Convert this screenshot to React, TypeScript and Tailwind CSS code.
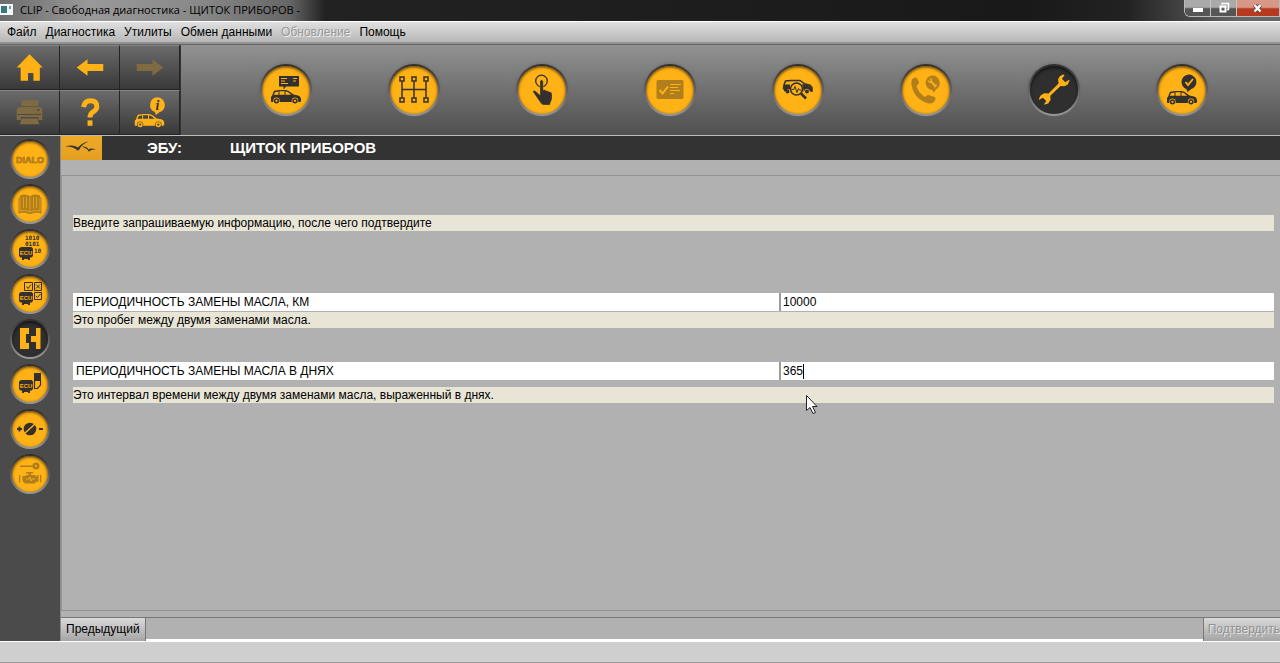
import { useState, type ReactNode } from "react";

const DARK = "#33302d";
const AMBER = "#ffb215";
const DIM = "#b07f1c";

const menuItems = [
  { label: "Файл" },
  { label: "Диагностика" },
  { label: "Утилиты" },
  { label: "Обмен данными" },
  { label: "Обновление", disabled: true },
  { label: "Помощь" },
];

// side view of a hatchback, 30 x 14 units
function Car({ x, y, color, back }: { x: number; y: number; color: string; back: string }) {
  return (
    <g transform={`translate(${x} ${y})`}>
      <path
        fill={color}
        d="M0 11.500V7L1.200 5.600 2.600 1.600Q3 .8 4.400.6L9 0h4.500q2.500 0 4.500 1.200l4.500 3.300 4.500.9q2.500.6 2.900 3.200l.2 2.400-1 .9H.6z"
      />
      <path fill={back} d="M2.800 4.800 4 2.200 7.500 1.400v3.400zM8.500 1.300h5v3.500h-5zM14.500 1.500q1.800 0 3 1l2.700 2.300h-5.700z" />
      <circle cx="5.500" cy="10.800" r="3.200" fill={back} />
      <circle cx="24" cy="10.800" r="3.200" fill={back} />
      <circle cx="5.500" cy="10.800" r="1.900" fill="none" stroke={color} strokeWidth="1.500" />
      <circle cx="24" cy="10.800" r="1.900" fill="none" stroke={color} strokeWidth="1.500" />
    </g>
  );
}

function Chip({ x, y }: { x: number; y: number }) {
  return (
    <g transform={`translate(${x} ${y})`}>
      <path fill={DARK} d="M2 0h10.500l1.500 1.500V9l-1.500 1.500H11V13H9v-1H5v1H3v-2.500H1.500L0 9V1.500z" />
      <text x="7" y="7.500" textAnchor="middle" fontSize="6" fontWeight="700" fontFamily="Liberation Sans, sans-serif" fill={AMBER}>
        ECU
      </text>
    </g>
  );
}

const tools: { label: string; active?: boolean; disabled?: boolean; icon: ReactNode }[] = [
  {
    label: "Автомобиль",
    icon: (
      <>
        <path fill={DARK} d="M17 10h20v10.500H24l-2.500 3v-3H17z" />
        <path stroke={AMBER} strokeWidth="1" d="M19 12.500h6M31 12.500h4M19 15h4M31 15h3M19 17.500h7" />
        <Car x={9} y={24} color={DARK} back={AMBER} />
      </>
    ),
  },
  {
    label: "Коробка передач",
    icon: (
      <g fill="none" stroke={DARK} strokeWidth="1.500">
        <path d="M12 15.500v16M24 15.500v16M36 15.500v16M12 23.500h24" />
        <path
          fill={AMBER}
          d="M10 11h4v4h-4zM22 11h4v4h-4zM34 11h4v4h-4zM10 32h4v4h-4zM22 32h4v4h-4zM34 32h4v4h-4z"
        />
      </g>
    ),
  },
  {
    label: "Выбор",
    icon: (
      <>
        <circle cx="23.500" cy="15" r="5.800" fill="none" stroke={DARK} strokeWidth="1.300" />
        <path
          fill={DARK}
          stroke={AMBER}
          strokeWidth="0.300"
          d="M22 15.500a1.600 1.600 0 0 1 3.200 0V24q2-.6 3 .7 2-.3 2.800 1 2.800-.3 3 2.300v4q0 2.500-1.500 4.500L32 39h-7l-2-1.500-3.500-5-4.500-6.500q-.6-1.500 1-1.500 1 0 1.800.8L22 29z"
        />
      </>
    ),
  },
  {
    label: "Контроль",
    disabled: true,
    icon: (
      <>
        <rect x="10.500" y="14" width="27" height="19" rx="1.500" fill={DIM} />
        <path fill="none" stroke={AMBER} strokeWidth="2" d="m13.500 24 3 3.500 5.500-7" />
        <path stroke={AMBER} strokeWidth="1" d="M24 18.500h11M24 21.500h8M24 24.500h10M24 27.500h4" />
      </>
    ),
  },
  {
    label: "Поиск неисправностей",
    icon: (
      <>
        <path
          fill="none"
          stroke={DARK}
          strokeWidth="1.500"
          d="M11 24l-1.500-1.500L10 19l1.500-4L17 14.500h9l5 3.500 5 1.200 2 2.300v4.500"
        />
        <path fill={DARK} d="M10 18.500h6v5q-3-1-4 1.500l-2 .5zM28 18l7 1.500 3 3v3h-2q-1.500-4-5-2l-1 2.500z" />
        <circle cx="13.500" cy="25.500" r="1.900" fill={DARK} />
        <circle cx="33" cy="25.500" r="1.900" fill={DARK} />
        <circle cx="22.500" cy="23" r="6" fill={AMBER} stroke={DARK} strokeWidth="1.500" />
        <path fill="none" stroke={DARK} strokeWidth="1" d="M17.500 23.500h2.200l1.300-3 2 6 1.500-4 1 1.500h2" />
        <path stroke={DARK} strokeWidth="2.500" d="m27 27.500 5 5" />
      </>
    ),
  },
  {
    label: "Техническая поддержка",
    disabled: true,
    icon: (
      <>
        <path
          fill={DIM}
          d="M10 13.500q2.500-3 5-1.500l2 4q.3 1.500-1.500 3l-1 1Q16.500 27 23 31l2-1.500q1-1 2.500-.3l5 1.800q1.800 1 .5 3.500-2 3.500-6 3Q12.500 34 9.500 19q-.4-3.500.5-5.500z"
        />
        <path fill={DIM} d="M30 9.500a7.500 7.500 0 0 1 3.500 14.200L32 26.500l-2-2.500a7.300 7.300 0 0 1 0-14.500z" />
        <path fill="none" stroke={AMBER} strokeWidth="2" d="m28.500 15 5.500 5.500" />
        <path fill="none" stroke={AMBER} strokeWidth="1.300" d="M26 14.500q1.500 2.500 3 1t-1-3M32.500 21.500q0-2.500 2.500-2" />
      </>
    ),
  },
  {
    label: "Ремонт",
    active: true,
    icon: (
      <path
        fill={AMBER}
        d="m33 8.500-3.200 1.800-1.700 3 .4 4.200L18.500 27.500l-4.200-.3-3.500 2-2 3.800.2.700 4-2 3.200 3.200-2.400 3.800 4.400-1.200 2.300-3.500-.2-4.200L30.500 20l4 .3 3.300-1.800 1.700-4-.4-.8-3.800 2.500-3.400-3.400 2.700-3.600z"
      />
    ),
  },
  {
    label: "Завершение",
    icon: (
      <>
        <path fill={DARK} d="M31 8.500a7.500 7.500 0 0 1 2 14.700L29.500 26l-1.200-3A7.500 7.500 0 0 1 31 8.500z" />
        <path fill="none" stroke={AMBER} strokeWidth="1.800" d="m27.500 16 2.500 3 5-6" />
        <Car x={9} y={25} color={DARK} back={AMBER} />
      </>
    ),
  },
];

const sideTools: { label: string; active?: boolean; disabled?: boolean; icon: ReactNode }[] = [
  {
    label: "Dialogys",
    disabled: true,
    icon: (
      <text
        x="18"
        y="21.500"
        textAnchor="middle"
        fontSize="9"
        fontWeight="700"
        fontFamily="Liberation Sans, sans-serif"
        fill="#dc981a"
        stroke="#9b6b19"
        strokeWidth="0.600"
      >
        DIALO
      </text>
    ),
  },
  {
    label: "Документация",
    disabled: true,
    icon: (
      <>
        <path
          fill={DIM}
          d="M6.500 11.500H8V9.500q6-2.500 10 .8 4-3.300 10-.8v2h1.500v16q-6.500-1.500-10 .5h-3q-3.500-2-10-.5z"
        />
        <path fill="none" stroke="#e0a01c" strokeWidth="1" d="M18 11v14M11.500 11v11M14.500 11v11.500M21.500 11v11.500M24.500 11v11M8 12v13q6.500-1.500 10 1 3.500-2.500 10-1V12" />
      </>
    ),
  },
  {
    label: "Данные ЭБУ",
    icon: (
      <>
        <g fontFamily="DejaVu Sans Mono, monospace" fontWeight="700" fontSize="6" fill={DARK}>
          <text x="13" y="9">
            1010
          </text>
          <text x="13" y="15">
            0101
          </text>
          <text x="22" y="22">
            10
          </text>
        </g>
        <Chip x={7} y={16} />
      </>
    ),
  },
  {
    label: "Проверка ЭБУ",
    icon: (
      <>
        <g fill="none" stroke={DARK} strokeWidth="1">
          <path d="M12.500 6.500h8v8h-8zM22.500 6.500h7v8h-7zM22.500 16.500h7v7h-7z" />
          <path d="m14.500 10.500 1.500 2 3-4M24 8.500l4 4M28 8.500l-4 4M24 20l1.500 1.500 3-3.500" />
        </g>
        <Chip x={7} y={16} />
      </>
    ),
  },
  {
    label: "Параметры",
    active: true,
    icon: <path fill={AMBER} d="M8 7h9v6h-3v9h3v6H8zM28.500 7v21H24v-7h-5v-6h5V7z" />,
  },
  {
    label: "Запись ЭБУ",
    icon: (
      <>
        <Chip x={7} y={14} />
        <path fill={DARK} d="M22 7h7v8h-7z" />
        <path fill="none" stroke={DARK} strokeWidth="1.200" d="M28.500 14v5l-3 3.500h-3V14" />
      </>
    ),
  },
  {
    label: "Настройка",
    icon: (
      <>
        <path stroke={DARK} strokeWidth="1.800" d="M5 18h5M7.500 15.500v5M27 18h4" />
        <circle cx="18" cy="18" r="6.300" fill={DARK} />
        <path stroke={AMBER} strokeWidth="1.500" d="m13 22 10-9" />
      </>
    ),
  },
  {
    label: "Двигатель",
    disabled: true,
    icon: (
      <g fill={DIM}>
        <path d="M8 9.500h13v1.500H8z" />
        <circle cx="24" cy="10" r="3.500" />
        <circle cx="24" cy="10" r="1" fill={AMBER} />
        <path d="M14 16h7v1.500h-2V19h4l2 2v-2h1.500v7H25v-1l-2 2.500H13L10.500 25v-5H13l1.500-1h2v-1.500H14zM7 19h1.200v7.500H7zM28 19h1.300v7.500H28z" />
        <path fill="none" stroke={AMBER} strokeWidth="0.800" d="M14 23h3l1-2 1 4 1-2h3" />
      </g>
    ),
  },
];

const navButtons: { label: string; disabled?: boolean; icon: ReactNode }[] = [
  { label: "Домой", icon: <path fill={AMBER} d="M30 8 43.500 21.500h-3V35h-6.500v-8h-5.500v8h-7.500V21.500h-4z" /> },
  { label: "Назад", icon: <path fill={AMBER} d="m17 21.500 11-8.500v5h16v7H28v5z" /> },
  { label: "Вперёд", disabled: true, icon: <path fill="#806a42" d="M44 21.500 33 13v5H17v7h16v5z" /> },
  {
    label: "Печать",
    disabled: true,
    icon: (
      <g fill="#806a42">
        <path d="M22 9h17v6H22zM20 16h21l2 2v11h-4v-3H21v3h-4V18z" />
        <path d="M22 27.500h16l2 6H20z" />
        <path stroke="#4d4843" strokeWidth="1" d="M18 23.500h24" />
        <path fill="#4d4843" d="M38 18h2v2h-2z" />
      </g>
    ),
  },
  {
    label: "Справка",
    icon: (
      <>
        <path
          fill="none"
          stroke={AMBER}
          strokeWidth="5"
          d="M24 16q1-6.500 7-6.500 6.500 0 6.500 6 0 3-3.500 5.200-3.500 2-3.500 5.800"
        />
        <path fill={AMBER} d="M28 29.500h5V35h-5z" />
      </>
    ),
  },
  {
    label: "Информация",
    icon: (
      <>
        <path fill={AMBER} d="M38 6a7.800 7.800 0 0 1 2 15.300L36.500 24l-1-3A7.800 7.800 0 0 1 38 6z" />
        <text x="38" y="18.500" textAnchor="middle" fontSize="14" fontWeight="700" fontStyle="italic" fontFamily="Liberation Serif, serif" fill={DARK}>
          i
        </text>
        <Car x={15} y={23} color={AMBER} back="#454443" />
      </>
    ),
  },
];

const fields = [
  {
    id: "oil-km",
    label: "ПЕРИОДИЧНОСТЬ ЗАМЕНЫ МАСЛА, КМ",
    hint: "Это пробег между двумя заменами масла.",
  },
  {
    id: "oil-days",
    label: "ПЕРИОДИЧНОСТЬ ЗАМЕНЫ МАСЛА В ДНЯХ",
    hint: "Это интервал времени между двумя заменами масла, выраженный в днях.",
  },
];

function TitleBar() {
  return (
    <header className="flex h-[21px] items-start bg-[linear-gradient(90deg,#6c6c6c_0,#999_90px,#888_200px,#666_290px,#222_325px,#191919_80%,#222_88%,#666_97%)] font-['Open_Sans','Noto_Sans',sans-serif]">
      <svg className="mt-1 h-3 w-3.5 shrink-0" viewBox="0 0 14 12" aria-hidden="true">
        <path fill="#f4f6f6" d="M0 0h13v11H0z" />
        <path fill="#35797e" d="M1 2h6v7H1z" />
        <path fill="#68a3b0" d="M9 2h2v3H9z" />
      </svg>
      <h1 className="ml-1.5 grow text-[11px] leading-5 text-black">CLIP - Свободная диагностика - ЩИТОК ПРИБОРОВ -</h1>
      <div className="flex h-[17px] overflow-hidden rounded-bl-md border border-t-0 border-[#b9b9b9]">
        <button
          aria-label="Свернуть"
          className="flex w-[26px] items-center justify-center border-r border-[#c4c4c4] bg-linear-to-b from-[#aaa] from-45% to-[#555] to-55%"
        >
          <span className="mt-1 h-1 w-2.5 bg-white" />
        </button>
        <button
          aria-label="Восстановить"
          className="flex w-[26px] items-center justify-center border-r border-[#c4c4c4] bg-linear-to-b from-[#aaa] from-45% to-[#555] to-55%"
        >
          <svg width="12" height="12" viewBox="0 0 12 12" fill="none">
            <path stroke="#fff" strokeWidth="1.500" d="M4 2.500V1.500h6.500v6H9" />
            <path stroke="#fff" strokeWidth="2" d="M2.500 4.500h5v5h-5z" />
          </svg>
        </button>
        <button
          aria-label="Закрыть"
          className="flex w-[42px] items-center justify-center bg-linear-to-b from-[#d89888] from-45% to-[#b73a20] to-55%"
        >
          <svg width="12" height="12" viewBox="0 0 12 12">
            <path stroke="#5c3b38" strokeWidth="4" d="m2.500 3 6 6.500M8.500 3l-6 6.500" />
            <path stroke="#fff" strokeWidth="2.500" d="m2.500 3 6 6.500M8.500 3l-6 6.500" />
          </svg>
        </button>
      </div>
    </header>
  );
}

function RoundButton({
  label,
  active,
  disabled,
  small,
  children,
}: {
  label: string;
  active?: boolean;
  disabled?: boolean;
  small?: boolean;
  children: ReactNode;
}) {
  return (
    <button
      aria-label={label}
      aria-pressed={!!active}
      disabled={disabled}
      className={`flex shrink-0 items-center justify-center rounded-full bg-linear-to-b from-[#302d2a] to-[#999] ${
        small ? "size-10" : "size-13 shadow-[0_0_2px_1px_#66666680]"
      }`}
    >
      <span
        className={`rounded-full ${small ? "size-9" : "size-12"} ${
          active
            ? "bg-[#302f2f] shadow-[inset_0_2px_3px_#151515]"
            : "bg-[#ffb215] shadow-[inset_0_1px_3px_#4b3412]"
        }`}
      >
        <svg viewBox={small ? "0 0 36 36" : "0 0 48 48"} aria-hidden="true">
          {children}
        </svg>
      </span>
    </button>
  );
}

export default function App() {
  const [values, setValues] = useState<Record<string, string>>({ "oil-km": "10000", "oil-days": "365" });

  return (
    <div className="flex min-h-screen flex-col overflow-hidden bg-[#b1b1b1] font-['Liberation_Sans',Arial,sans-serif] text-xs text-black">
      <TitleBar />

      <nav className="flex h-[23px] items-center gap-[9px] border-t border-b-2 border-t-white border-b-[#929292] bg-linear-to-b from-[#e0e0e0] to-[#b7b7b7] pl-[7px]">
        {menuItems.map((m) => (
          <button
            key={m.label}
            disabled={m.disabled}
            className="disabled:text-[#999] disabled:[text-shadow:1px_1px_0_#eee]"
          >
            {m.label}
          </button>
        ))}
      </nav>

      <div className="flex border-t border-b border-t-[#656565] border-b-[#bcbcbc] bg-linear-to-b from-[#929292] to-[#505050]">
        <div className="grid shrink-0 grid-cols-3 border-r border-[#343434]">
          {navButtons.map((b) => (
            <button
              key={b.label}
              aria-label={b.label}
              disabled={b.disabled}
              className="w-15 border-t border-r border-b border-t-[#858585] border-r-[#242424] border-b-[#242424] bg-linear-to-b from-[#6b6b6b] to-[#393939]"
            >
              <svg className="h-[43px] w-full" viewBox="0 0 60 43" aria-hidden="true">
                {b.icon}
              </svg>
            </button>
          ))}
        </div>
        <div className="grid grow grid-cols-8 items-center justify-items-center pr-[34px] pl-[41px]">
          {tools.map((t) => (
            <RoundButton key={t.label} label={t.label} active={t.active} disabled={t.disabled}>
              {t.icon}
            </RoundButton>
          ))}
        </div>
      </div>

      <div className="flex grow">
        <aside className="flex w-15 shrink-0 flex-col items-center gap-[5px] bg-[#4b4b4b] pt-[3px]">
          {sideTools.map((t) => (
            <RoundButton key={t.label} label={t.label} active={t.active} disabled={t.disabled} small>
              {t.icon}
            </RoundButton>
          ))}
        </aside>

        <main className="flex min-w-0 grow flex-col border-l border-[#8c8c8c]">
          <div className="flex h-6 shrink-0 items-center bg-[#333] text-[15px] font-bold text-white">
            <svg className="h-6 w-[41px] bg-linear-to-b from-[#edaa28] to-[#e59f1e]" viewBox="0 0 41 24" aria-hidden="true">
              <path
                fill="#38342f"
                d="M4 10.500q8-2.500 13 1Q22 6 28 5.500q-7 2-10 8.500l-1.500.5Q12 10 4 10.500zM21 10.500q5-.5 6.500 3 3-2 7.500.3-4.500-.8-7 2Q25.500 12 21 10.500z"
              />
            </svg>
            <span className="ml-[45px] w-[83px]">ЭБУ:</span>
            <h2>ЩИТОК ПРИБОРОВ</h2>
          </div>

          <section className="mt-[15px] grow border-t border-b border-l border-[#949494] pt-[39px] pr-1.5 pl-[11px]">
            <p className="bg-[#e8e5d6] leading-4">Введите запрашиваемую информацию, после чего подтвердите</p>
            <form id="params" className="mt-[62px] flex flex-col gap-[34px]" onSubmit={(e) => e.preventDefault()}>
              {fields.map((f, i) => (
                <div key={f.id}>
                  <div className="flex h-[19px] border-b border-[#b1b1b1] leading-[18px]">
                    <label htmlFor={f.id} className="w-[706px] bg-white pl-[3px]">
                      {f.label}
                    </label>
                    <div className="relative grow border-l-2 border-[#9b9b9b] bg-white">
                      <input
                        id={f.id}
                        inputMode="numeric"
                        value={values[f.id]}
                        onChange={(e) => setValues({ ...values, [f.id]: e.target.value })}
                        className="block w-full pl-0.5 outline-none"
                      />
                      {i === 1 && (
                        <>
                          <span className="absolute top-0.5 left-[22px] h-[15px] w-px bg-black" />
                          <svg className="absolute top-8 left-6 h-5 w-3.5" viewBox="0 0 14 20" aria-hidden="true">
                            <path fill="#fff" stroke="#222" d="M1.500 1.500v15l3.500-3 3 6 2.500-1-3-6h4.500z" />
                          </svg>
                        </>
                      )}
                    </div>
                  </div>
                  <p className={`bg-[#e8e5d6] leading-4 ${i === 1 ? "mt-1.5" : ""}`}>{f.hint}</p>
                </div>
              ))}
            </form>
          </section>

          <div className="mt-1.5 flex h-6 shrink-0 justify-between border-t border-b-2 border-t-[#777] border-b-white">
            <button className="-mb-0.5 border-r border-[#777] bg-linear-to-b from-[#dadada] to-[#a5a5a5] px-[5px] pb-0.5">
              Предыдущий
            </button>
            <button
              form="params"
              disabled
              className="-mb-0.5 border-l border-[#777] bg-linear-to-b from-[#dadada] to-[#a5a5a5] pb-0.5 pl-1 text-[#919191] [text-shadow:1px_1px_0_#e5e5e5]"
            >
              Подтвердить
            </button>
          </div>
        </main>
      </div>

      <footer className="h-[22px] border-t border-b border-t-white border-b-[#999] bg-[#cfcfcf]" />
    </div>
  );
}
